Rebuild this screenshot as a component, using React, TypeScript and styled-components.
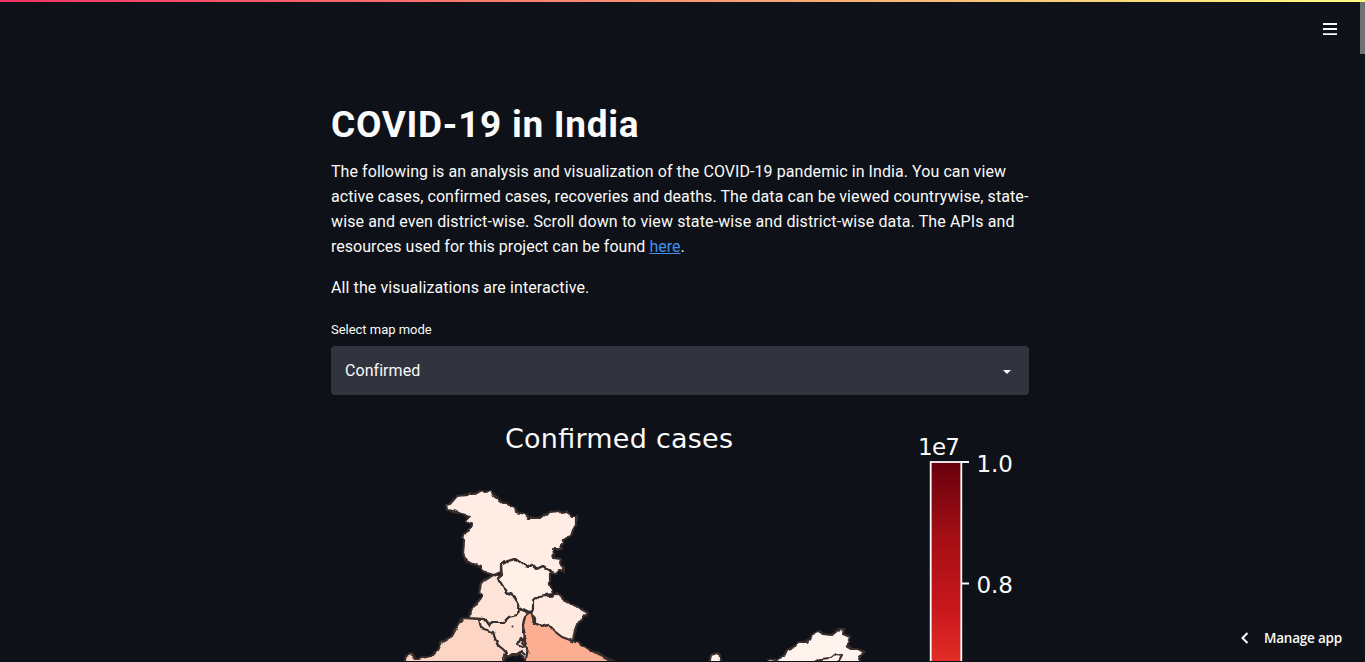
import React from "react";
import styled, { createGlobalStyle } from "styled-components";

const GlobalStyle = createGlobalStyle`
  * { box-sizing: border-box; }
  html, body { margin: 0; height: 100%; overflow: hidden; background: #0e1117; }
  body { color: #fafafa; font-family: Roboto, "Open Sans", sans-serif; }
`;

const Page = styled.div`
  position: relative;
  height: 662px;
  overflow: hidden;
  background: #0e1117;
`;

const Decoration = styled.div`
  height: 2px;
  background: linear-gradient(90deg, #f63366, #fffd80);
`;

const Header = styled.header`
  display: flex;
  justify-content: flex-end;
  height: 54px;
  padding: 20px 28px 0 0;
`;

const MenuIcon = styled.svg`
  display: block;
  width: 14px;
  height: 14px;
`;

const Main = styled.main`
  width: 698px;
  margin: 0 0 0 331px;
  padding-top: 45px;
`;

const Title = styled.h1`
  margin: 0;
  height: 47px;
  font-size: 37px;
  font-weight: 700;
  line-height: 48px;
  white-space: nowrap;
  letter-spacing: 0.7px;
`;

const Paragraph = styled.p`
  margin: 0;
  padding-top: 11px;
  & + & { padding-top: 16px; }
  font-size: 16px;
  line-height: 25px;
`;

const Line = styled.span<{ $spacing: number }>`
  display: block;
  width: max-content;
  white-space: nowrap;
  letter-spacing: ${(p) => p.$spacing}px;
`;

const Link = styled.a`
  color: #428fec;
  text-decoration: underline;
`;

const Label = styled.label`
  display: block;
  padding-top: 20px;
  height: 46px;
  font-size: 13px;
  line-height: 20px;
`;

const Select = styled.div`
  display: flex;
  align-items: center;
  justify-content: space-between;
  height: 49px;
  padding: 0 18px 0 14px;
  border-radius: 4px;
  background: #31333f;
  font-size: 16px;
`;

const Caret = styled.svg`
  display: block;
  width: 8px;
  height: 4px;
  margin-top: 2px;
`;

const Chart = styled.svg`
  display: block;
  width: 698px;
  height: 266px;
  font-family: "DejaVu Sans", sans-serif;
`;

const Scrollbar = styled.div`
  position: absolute;
  top: 2px;
  right: 0;
  width: 5px;
  height: 52px;
  background: #6f7175;
`;

const ManageApp = styled.button`
  position: absolute;
  right: 23px;
  bottom: 14px;
  display: flex;
  align-items: center;
  gap: 15px;
  height: 20px;
  padding: 0;
  border: 0;
  background: none;
  color: #fafafa;
  font: 600 13.5px/20px "Open Sans", sans-serif;
  letter-spacing: -0.2px;
`;

const regions = [
  {
    name: "Rajasthan",
    fill: "#fdd5c4",
    d: "M404 664L406 656L411 654L416 658L418 659L432 656L438 650L442 642L452 636L458 625L463 618L479 619L482 627L493 632L497 644L506 651L505 664Z",
  },
  {
    name: "Punjab",
    fill: "#fee4d8",
    d: "M493 575L499 576L506 593L513 596L517 604L520 609L517 615L509 617L504 622L492 622L490 626L485 619L469 618L470 611L481 598L482 595L479 593L481 583Z",
  },
  {
    name: "Haryana",
    fill: "#fee2d5",
    d: "M479 619L485 619L490 626L492 622L504 622L509 617L517 615L520 609L525 611L529 615L524 620L523 632L525 637L522 643L526 646L530 653L528 661L520 654L514 654L507 657L505 651L498 645L493 632L481 628Z",
  },
  {
    name: "Uttar Pradesh",
    fill: "#fcae92",
    d: "M531 612L535 623L541 626L547 624L553 630L562 636L568 639L573 641L583 645L592 651L603 656L612 661L617 664H525L528 648L522 643L525 637L523 625L525 617Z",
  },
  {
    name: "Jammu and Kashmir",
    fill: "#ffece4",
    d: "M446 505L450 504L457 496L467 495L470 493L475 494L482 490L485 492L491 491L494 496L498 499L503 503L507 503L510 506L515 508L516 512L524 514L528 518L540 518L545 514L550 512L560 511L562 513L567 512L572 516L576 516L576 525L573 530L571 536L567 537L564 539L564 544L560 544L562 549L553 549L554 554L553 558L561 559L560 563L563 566L563 571L560 570L556 574L551 573L547 569L543 566L537 569L532 564L527 567L519 561L516 559L508 561L501 565L501 572L494 575L487 573L482 570L481 567L466 561L463 554L464 541L462 537L466 532L471 529L472 524L468 522L466 520L469 517L462 515L456 512L454 511L447 510Z",
  },
  {
    name: "Himachal Pradesh",
    fill: "#fff0e8",
    d: "M501 565L508 561L516 559L527 567L532 564L537 569L543 566L547 569L550 573L550 584L553 594L545 595L535 598L533 607L533 612L525 611L520 608L517 604L515 597L511 593L507 594L504 588L501 583L497 579L502 574Z",
  },
  {
    name: "Uttarakhand",
    fill: "#ffeae1",
    d: "M533 601L539 596L546 595L553 597L557 593L564 600L574 605L588 613L582 620L578 622L575 630L573 641L562 637L553 630L547 624L541 626L535 623L535 618L531 614L533 609Z",
  },
  {
    name: "Arunachal Pradesh",
    fill: "#fff3ed",
    d: "M768 664L769 659L775 660L784 656L787 650L794 647L798 642L807 642L812 635L819 631L823 634L831 635L836 631L844 629L843 634L850 637L850 640L846 646L851 649L858 649L864 652L860 657L858 664Z",
  },
  { name: "Sikkim", fill: "#fff3ed", d: "M709 664L711 655L717 653L720 655L720 664Z" },
];

const borders = [
  "M811 664L820 659L831 658L836 654L842 655L837 664",
  "M518 642L521 638L525 642L526 646L522 647L517 645Z",
  "M505 651L503 659L505 664M507 659L512 654L517 656L521 651L525 655",
];

const ConfirmedMap = () => (
  <Chart viewBox="331 395 698 266" aria-label="Confirmed cases">
    <defs>
      <linearGradient id="reds" gradientUnits="userSpaceOnUse" x1="0" y1="462" x2="0" y2="1068">
        <stop offset="0" stopColor="#67000d" />
        <stop offset="0.125" stopColor="#a50f15" />
        <stop offset="0.25" stopColor="#cb181d" />
        <stop offset="0.375" stopColor="#ef3b2c" />
        <stop offset="0.5" stopColor="#fb694a" />
      </linearGradient>
      <filter id="coast" x="-5%" y="-5%" width="110%" height="110%">
        <feTurbulence type="fractalNoise" baseFrequency="0.16" numOctaves="1" seed="4" />
        <feDisplacementMap in="SourceGraphic" scale="4" xChannelSelector="R" yChannelSelector="G" />
      </filter>
    </defs>
    <text x="505" y="448" fontSize="27" textLength="228" fill="#fafafa">Confirmed cases</text>
    <g stroke="#382f2e" strokeWidth="2.2" strokeLinejoin="round" filter="url(#coast)">
      {regions.map((r) => <path key={r.name} d={r.d} fill={r.fill} />)}
      {borders.map((d) => <path key={d} d={d} fill="none" />)}
    </g>
    <circle cx="512.5" cy="626.5" r="1" fill="#382f2e" />
    <rect x="930.7" y="462" width="30.6" height="610" fill="url(#reds)" stroke="#fafafa" strokeWidth="1.8" />
    <path d="M961 462H969M961 583.5H969" stroke="#fafafa" strokeWidth="1.8" />
    <g fontSize="23" fill="#fafafa">
      <text x="918" y="455" textLength="42">1e7</text>
      <text x="976.5" y="472" textLength="36.5">1.0</text>
      <text x="976.5" y="593" textLength="36.5">0.8</text>
    </g>
  </Chart>
);

export default function App() {
  return (
    <Page>
      <GlobalStyle />
      <Decoration />
      <Header>
        <MenuIcon viewBox="0 0 14 14">
          <path d="M0 2H14M0 7H14M0 12.2H14" stroke="#fafafa" strokeWidth="1.8" />
        </MenuIcon>
      </Header>
      <Main>
        <Title>COVID-19 in India</Title>
        <Paragraph>
          <Line $spacing={0.074}>The following is an analysis and visualization of the COVID-19 pandemic in India. You can view</Line>
          <Line $spacing={0.07}>active cases, confirmed cases, recoveries and deaths. The data can be viewed countrywise, state-</Line>
          <Line $spacing={0.118}>wise and even district-wise. Scroll down to view state-wise and district-wise data. The APIs and</Line>
          <Line $spacing={0.03}>resources used for this project can be found <Link>here</Link>.</Line>
        </Paragraph>
        <Paragraph>
          <Line $spacing={0.1}>All the visualizations are interactive.</Line>
        </Paragraph>
        <Label><Line $spacing={-0.02}>Select map mode</Line></Label>
        <Select>
          <Line $spacing={0.05}>Confirmed</Line>
          <Caret viewBox="0 0 8 4"><path d="M0 0H8L4 4Z" fill="#fafafa" /></Caret>
        </Select>
        <ConfirmedMap />
      </Main>
      <Scrollbar />
      <ManageApp>
        <svg width="8" height="12" viewBox="0 0 8 12"><path d="M6.5 1L1.5 6L6.5 11" fill="none" stroke="#fafafa" strokeWidth="2" /></svg>
        Manage app
      </ManageApp>
    </Page>
  );
}
